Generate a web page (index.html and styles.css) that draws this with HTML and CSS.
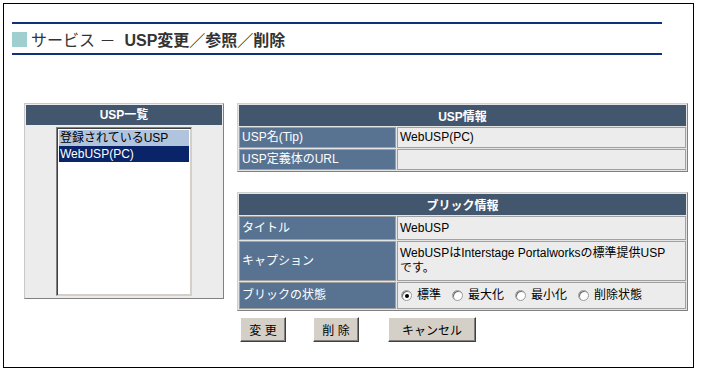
FILE: index.html
```html
<!DOCTYPE html>
<html lang="ja">
<head>
<meta charset="utf-8">
<title>サービス - USP変更／参照／削除</title>
<link rel="stylesheet" href="styles.css">
</head>
<body>
<div class="frame">
  <div class="head">
    <div class="rule"></div>
    <h1 class="title"><span class="mark"></span><span class="t-normal">サービス －</span><span class="t-bold">USP変更／参照／削除</span></h1>
    <div class="rule"></div>
  </div>
  <div class="main">
    <div class="list-panel">
      <div class="panel-head">USP一覧</div>
      <div class="panel-body">
        <div class="listbox">
          <div class="opt opt-group">登録されているUSP</div>
          <div class="opt opt-sel">WebUSP(PC)</div>
        </div>
      </div>
    </div>
    <div class="right">
      <table class="info">
        <colgroup><col class="c-label"><col class="c-value"></colgroup>
        <tr><th colspan="2" class="th">USP情報</th></tr>
        <tr class="r21"><td class="lab">USP名(Tip)</td><td class="val">WebUSP(PC)</td></tr>
        <tr class="r21"><td class="lab">USP定義体のURL</td><td class="val"></td></tr>
      </table>
      <table class="info info2">
        <colgroup><col class="c-label2"><col class="c-value2"></colgroup>
        <tr><th colspan="2" class="th">ブリック情報</th></tr>
        <tr class="r24"><td class="lab">タイトル</td><td class="val">WebUSP</td></tr>
        <tr class="r39"><td class="lab">キャプション</td><td class="val nowrap">WebUSPはInterstage Portalworksの標準提供USP<br>です。</td></tr>
        <tr class="r28"><td class="lab">ブリックの状態</td><td class="val">
          <div class="radios">
            <span class="radio on"></span><span class="rl">標準</span>
            <span class="radio"></span><span class="rl">最大化</span>
            <span class="radio"></span><span class="rl">最小化</span>
            <span class="radio"></span><span class="rl">削除状態</span>
          </div>
        </td></tr>
      </table>
      <div class="buttons">
        <button class="btn b-short">変 更</button>
        <button class="btn b-short b-del">削 除</button>
        <button class="btn b-long">キャンセル</button>
      </div>
    </div>
  </div>
</div>
</body>
</html>
```
FILE: styles.css
```css
* { box-sizing: border-box; }
html, body { margin: 0; padding: 0; background: #fff; }
body {
  font-family: "Liberation Sans", "Noto Sans CJK JP", sans-serif;
  font-size: 12px;
  color: #000;
}
.frame {
  margin: 3px 0 0 3px;
  width: 691px;
  height: 365px;
  border: 1px solid #000;
  padding: 18px 0 0 8px;
}
.rule {
  width: 650px;
  height: 2px;
  background: #0b347a;
}
.title {
  margin: 0;
  height: 29px;
  display: flex;
  align-items: center;
  font-size: 16px;
  font-weight: normal;
  color: #333;
  padding-top: 1px;
}
.mark {
  width: 15px;
  height: 15px;
  background: #9fcfcf;
  margin-right: 4px;
}
.t-normal { margin-right: 9px; }
.t-bold { font-weight: bold; }
.main {
  display: flex;
  gap: 13px;
  margin-top: 48px;
  padding-left: 12px;
}
.list-panel {
  width: 200px;
  height: 196px;
  border: 1px solid;
  border-color: #c8c8c8 #808080 #808080 #c8c8c8;
  background: #ececec;
  padding: 1px;
  display: flex;
  flex-direction: column;
}
.panel-head {
  height: 20px;
  background: #42566e;
  color: #fff;
  font-weight: bold;
  text-align: center;
  line-height: 20px;
}
.panel-body {
  flex: 1;
  display: flex;
  justify-content: center;
  padding-top: 2px;
  padding-bottom: 1px;
}
.listbox {
  width: 136px;
  background: #fff;
  border: 1px solid;
  border-color: #808080 #d4d0c8 #d4d0c8 #808080;
  box-shadow: inset 1px 1px 0 #404040, inset -1px -1px 0 #d4d0c8;
  padding: 2px 2px;
}
.opt {
  height: 16px;
  line-height: 16px;
  padding-left: 1px;
  white-space: nowrap;
}
.opt-group { background: #b0c4de; }
.opt-sel { background: #0a246a; color: #fff; }
.right { width: 451px; }
.info {
  width: 451px;
  table-layout: fixed;
  border-collapse: separate;
  border-spacing: 1px;
  border: 1px solid;
  border-color: #d0d0d0 #808080 #808080 #d0d0d0;
  background: #e4e4e4;
}
.c-label, .c-label2 { width: 157px; }
.info2 { margin-top: 20px; }
.th {
  height: 21px;
  background: #42566e;
  color: #fff;
  font-weight: bold;
  text-align: center;
  padding: 0;
  border: 1px solid #42566e;
}
.info td {
  padding: 0 2px;
  border: 1px solid #a0a0a0;
  vertical-align: middle;
  line-height: 15px;
}
.r21 td { height: 21px; }
.r24 td { height: 24px; }
.r39 td { height: 40px; }
.r28 td { height: 27px; }
.lab { background: #587392; color: #fff; white-space: nowrap; }
.val { background: #ececec; color: #000; }
.nowrap { white-space: nowrap; }
.radios {
  display: flex;
  align-items: center;
  padding-left: 1px;
}
.radio {
  width: 11px;
  height: 11px;
  border-radius: 50%;
  background: #fff;
  border: 1px solid #9a9a9a;
  box-shadow: inset 1px 1px 0 #707070;
  margin-right: 5px;
  display: flex;
  align-items: center;
  justify-content: center;
}
.radio.on::after {
  content: "";
  width: 4px;
  height: 4px;
  border-radius: 50%;
  background: #000;
}
.rl { margin-right: 11px; }
.buttons {
  display: flex;
  margin-top: 6px;
  padding-left: 3px;
}
.btn {
  height: 25px;
  font-family: "Liberation Sans", "Noto Sans CJK JP", sans-serif;
  font-size: 12px;
  color: #000;
  background: #d4d0c8;
  border: 1px solid;
  border-color: #fff #404040 #404040 #fff;
  box-shadow: inset -1px -1px 0 #808080;
  padding: 0;
}
.b-short { width: 46px; }
.b-del { margin-left: 27px; }
.b-long { width: 88px; margin-left: 29px; }
```
